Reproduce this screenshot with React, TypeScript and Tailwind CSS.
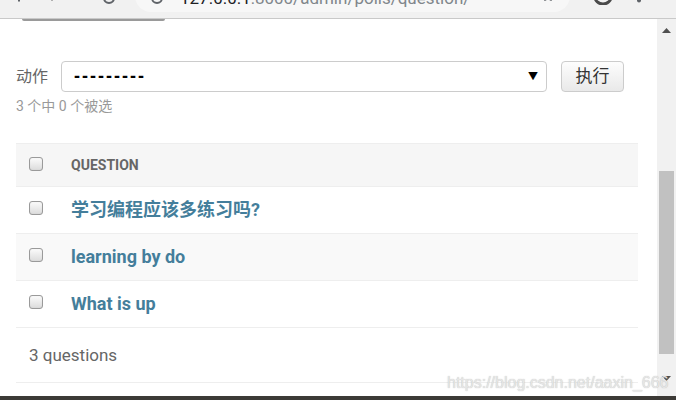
import React from "react";

const FONT = 'Roboto, "Noto Sans CJK SC", "Liberation Sans", sans-serif';

function Checkbox() {
  return (
    <div className="w-[14px] h-[14px] rounded-[3px] border border-[#9a9a9a] bg-gradient-to-b from-[#fbfbfb] to-[#dcdcdc] shadow-[inset_0_0_1px_rgba(0,0,0,0.15)]" />
  );
}

function Row({ text, alt }: { text: string; alt?: boolean }) {
  return (
    <div className={`h-[47px] flex items-center border-b border-[#eeeeee] ${alt ? "bg-[#f9f9f9]" : "bg-white"}`}>
      <div className="w-[55px] pl-[13px] flex items-center -mt-[4px]">
        <Checkbox />
      </div>
      <a className="text-[18px] font-bold text-[#447e9b] leading-none -mt-[1px]">{text}</a>
    </div>
  );
}

export default function App() {
  return (
    <div className="w-[676px] h-[400px] overflow-hidden bg-white flex flex-col relative" style={{ fontFamily: FONT }}>
      {/* browser chrome (cut off) */}
      <div className="h-[19px] shrink-0 bg-[#f1f1f1] border-b border-[#c9c9c9] flex items-start overflow-hidden">
        <svg width="8" height="3" className="ml-[15px]" viewBox="0 0 8 3">
          <rect x="3" y="0" width="2" height="1.5" fill="#5f6368" />
        </svg>
        <svg width="8" height="3" className="ml-[25px]" viewBox="0 0 8 3">
          <rect x="3" y="0" width="2" height="1" fill="#b0b0b0" />
        </svg>
        <svg width="14" height="4" className="ml-[46px]" viewBox="0 0 14 4">
          <path d="M2 -2 A5 5 0 0 0 12 -2" stroke="#5f6368" strokeWidth="2" fill="none" />
        </svg>
        <div className="ml-[19px] -mt-[20px] h-[32px] w-[435px] rounded-full bg-[#f7f7f7] flex items-end pb-[5px] overflow-hidden">
          <svg width="14" height="6" className="ml-[15px] mb-[1px]" viewBox="0 0 14 6">
            <path d="M2 -2 A5 5 0 0 0 12 -2" stroke="#5f6368" strokeWidth="1.8" fill="none" />
          </svg>
          <div className="ml-[16px] text-[17px] leading-[17px] whitespace-nowrap">
            <span className="text-[#202124]">127.0.0.1</span>
            <span className="text-[#80868b]">:8000/admin/polls/question/</span>
          </div>
          <div className="flex-1" />
          <svg width="16" height="4" className="mr-[14px] mb-[6px]" viewBox="0 0 16 4">
            <path d="M2 0 L5 3 L8 1.5 L11 3 L14 0" stroke="#5f6368" strokeWidth="1.6" fill="none" />
          </svg>
        </div>
        <svg width="18" height="5" className="ml-[24px]" viewBox="0 0 18 5">
          <path d="M1 -3 A8 7 0 0 0 17 -3" stroke="#4a4a4a" strokeWidth="3" fill="none" />
        </svg>
        <svg width="6" height="4" className="ml-[24px]" viewBox="0 0 6 4">
          <circle cx="3" cy="0.5" r="2" fill="#5f6368" />
        </svg>
      </div>

      <div className="flex flex-1 min-h-0">
        {/* page content */}
        <div className="flex-1 min-w-0 flex flex-col">
          <div className="ml-[22px] w-[143px] h-[2px] rounded-b-full bg-[#9a9a9a]" />

          <div className="mt-[40px] pl-[16px] flex items-center h-[31px]">
            <span className="text-[16px] text-[#666666] leading-none">动作</span>
            <div className="ml-[13px] w-[486px] h-[31px] rounded-[4px] border border-[#cccccc] bg-white flex items-center pl-[12px] pr-[8px]">
              <span className="text-[18px] text-black tracking-[2px] font-bold" style={{ fontFamily: '"Liberation Sans", Arial, sans-serif' }}>
                ---------
              </span>
              <div className="flex-1" />
              <span className="text-[10px] text-black leading-none">▼</span>
            </div>
            <div className="ml-[14px] w-[63px] h-[31px] rounded-[4px] border border-[#cccccc] bg-gradient-to-b from-[#fdfdfd] to-[#e9e9e9] flex items-center justify-center">
              <span className="text-[17px] text-[#333333] leading-none">执行</span>
            </div>
          </div>

          <div className="mt-[6px] pl-[16px] text-[14px] text-[#999999] leading-[16px] whitespace-pre">3 个中 0 个被选</div>

          <div className="mt-[29px] ml-[16px] w-[622px]">
            <div className="h-[44px] bg-[#f6f6f6] border-t border-[#eeeeee] border-b flex items-center">
              <div className="w-[55px] pl-[13px] flex items-center -mt-[3px]">
                <Checkbox />
              </div>
              <span className="text-[14px] font-bold text-[#666666] leading-none">QUESTION</span>
            </div>
            <Row text="学习编程应该多练习吗?" />
            <Row text="learning by do" alt />
            <Row text="What is up" />
            <div className="h-[55px] border-b border-[#eeeeee] flex items-center pl-[13px]">
              <span className="text-[17px] text-[#666666] leading-none">3 questions</span>
            </div>
          </div>
        </div>

        {/* scrollbar */}
        <div className="w-[19px] shrink-0 bg-[#f1f1f1] flex flex-col items-center">
          <svg width="9" height="5" className="mt-[9px]" viewBox="0 0 9 5">
            <path d="M0 5 L4.5 0 L9 5 Z" fill="#505050" />
          </svg>
          <div className="mt-[138px] w-[15px] h-[183px] bg-[#c1c1c1]" />
          <div className="flex-1" />
          <svg width="9" height="5" className="mb-[15px]" viewBox="0 0 9 5">
            <path d="M0 0 L4.5 5 L9 0 Z" fill="#505050" />
          </svg>
        </div>
      </div>

      <div className="h-[4px] shrink-0 bg-[#3c3a36]" />

      <div
        className="absolute left-[447px] top-[373px] text-[16px] leading-[20px] text-[#e6e6e6] whitespace-nowrap"
        style={{ fontFamily: '"Liberation Sans", Arial, sans-serif', textShadow: "0 0 1px rgba(120,120,120,0.5)" }}
      >
        https://blog.csdn.net/aaxin_666
      </div>
    </div>
  );
}
